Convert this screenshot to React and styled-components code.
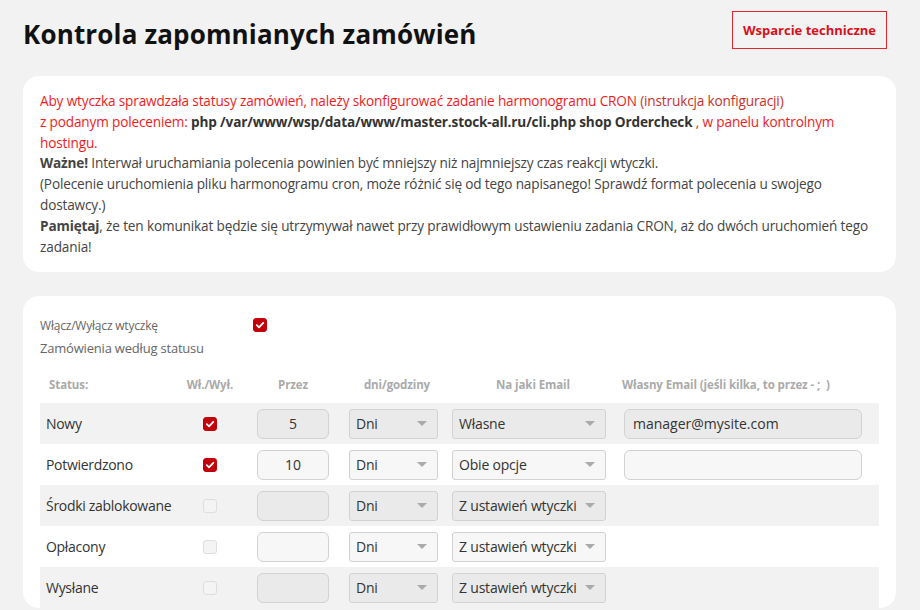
import React from "react";
import styled, { createGlobalStyle } from "styled-components";

const Global = createGlobalStyle`
  html, body { margin: 0; padding: 0; background: #f2f2f2; }
  body { font-family: "Open Sans", "Noto Sans", sans-serif; color: #333; }
  * { box-sizing: border-box; }
`;

const Page = styled.div`
  padding: 11px 24px 0 23px;
  width: 920px;
`;

const Header = styled.div`
  display: flex;
  align-items: flex-start;
  justify-content: space-between;
  height: 65px;
  padding-right: 9px;
`;

const Title = styled.h1`
  margin: 5px 0 0 0;
  font-size: 26px;
  font-weight: 700;
  color: #111;
  letter-spacing: 0.15px;
`;

const SupportButton = styled.button`
  height: 38px;
  padding: 0 10px;
  border: 1px solid #e0262e;
  background: #f3f3f3;
  color: #d8101c;
  font-family: inherit;
  font-weight: 700;
  font-size: 13px;
  letter-spacing: 0;
`;

const Card = styled.div`
  background: #fff;
  border-radius: 16px;
  width: 873px;
  padding: ${(p) => p.$pad || "14px 17px"};
  margin-bottom: ${(p) => p.$mb || "24px"};
`;

const Notice = styled.div`
  font-size: 13.6px;
  line-height: 20.8px;
  color: #444;
  letter-spacing: -0.15px;
  max-width: 840px;
`;

const Red = styled.span`
  color: #f01b22;
`;
const Link = styled.span`
  color: #c8312b;
`;
const Code = styled.b`
  color: #333;
  font-weight: 700;
`;

const ToggleRow = styled.div`
  display: flex;
  align-items: center;
  height: 20px;
  margin-top: 4px;
`;

const SmallLabel = styled.span`
  font-size: 12px;
  color: #666;
  width: 213px;
  letter-spacing: -0.2px;
`;

const Subtitle = styled.div`
  font-size: 13px;
  color: #666;
  margin-top: 4px;
  letter-spacing: -0.2px;
`;

const Grid = styled.div`
  display: grid;
  grid-template-columns: 140px 60px 106px 102px 170px 1fr;
  align-items: center;
  height: ${(p) => p.$h || "41px"};
  background: ${(p) => (p.$shade ? "#f2f2f2" : "#fff")};
`;

const HeadCell = styled.div`
  font-size: 11.5px;
  font-weight: 700;
  color: #aaa;
  text-align: ${(p) => p.$align || "center"};
  padding-left: ${(p) => p.$pl || "0"};
  letter-spacing: -0.1px;
  white-space: nowrap;
`;

const Table = styled.div`
  margin-top: 8px;
`;

const StatusName = styled.div`
  font-size: 14px;
  color: #333;
  padding-left: 6px;
  letter-spacing: -0.3px;
`;

const CheckCell = styled.div`
  display: flex;
  justify-content: center;
`;

const Box = styled.span`
  width: 14px;
  height: 14px;
  border-radius: 3px;
  display: inline-flex;
  align-items: center;
  justify-content: center;
  background: ${(p) => (p.$on ? "#c2000b" : "#f4f4f4")};
  border: 1px solid ${(p) => (p.$on ? "#c2000b" : "#dedede")};
`;

const NumInput = styled.div`
  margin-left: 17px;
  width: 72px;
  height: 30px;
  border: 1px solid #d2d2d2;
  border-radius: 6px;
  background: rgba(0, 0, 0, 0.03);
  display: flex;
  align-items: center;
  justify-content: center;
  font-size: 14px;
  color: #333;
`;

const Select = styled.div`
  margin-left: ${(p) => p.$ml || "3px"};
  width: ${(p) => p.$w || "89px"};
  height: 30px;
  border: 1px solid #d2d2d2;
  border-radius: 3px;
  background: rgba(0, 0, 0, 0.03);
  display: flex;
  align-items: center;
  justify-content: space-between;
  padding: 0 10px 0 6px;
  font-size: 14px;
  color: #333;
  letter-spacing: -0.2px;
`;

const Arrow = styled.span`
  width: 0;
  height: 0;
  border-left: 5px solid transparent;
  border-right: 5px solid transparent;
  border-top: 5px solid #aaa;
`;

const TextInput = styled.div`
  margin-left: 6px;
  width: 238px;
  height: 30px;
  border: 1px solid #d2d2d2;
  border-radius: 6px;
  background: rgba(0, 0, 0, 0.03);
  display: flex;
  align-items: center;
  padding: 0 8px;
  font-size: 14px;
  color: #333;
`;

const Check = ({ on }) => (
  <Box $on={on}>
    {on && (
      <svg width="10" height="10" viewBox="0 0 10 10">
        <path d="M1.8 5.2 L4 7.3 L8.3 2.8" fill="none" stroke="#fff" strokeWidth="1.8" strokeLinecap="round" strokeLinejoin="round" />
      </svg>
    )}
  </Box>
);

const rows = [
  { name: "Nowy", on: true, num: "5", unit: "Dni", mail: "Własne", own: "manager@mysite.com", showOwn: true },
  { name: "Potwierdzono", on: true, num: "10", unit: "Dni", mail: "Obie opcje", own: "", showOwn: true },
  { name: "Środki zablokowane", on: false, num: "", unit: "Dni", mail: "Z ustawień wtyczki", showOwn: false },
  { name: "Opłacony", on: false, num: "", unit: "Dni", mail: "Z ustawień wtyczki", showOwn: false },
  { name: "Wysłane", on: false, num: "", unit: "Dni", mail: "Z ustawień wtyczki", showOwn: false },
];

export default function App() {
  return (
    <>
      <Global />
      <Page>
        <Header>
          <Title>Kontrola zapomnianych zamówień</Title>
          <SupportButton>Wsparcie techniczne</SupportButton>
        </Header>
        <Card $pad="15px 17px 15px 17px">
          <Notice>
            <Red>
              Aby wtyczka sprawdzała statusy zamówień, należy skonfigurować zadanie harmonogramu CRON{" "}
            </Red>
            <Link>(instrukcja konfiguracji)</Link>
            <br />
            <Red>z podanym poleceniem: </Red>
            <Code>php /var/www/wsp/data/www/master.stock-all.ru/cli.php shop Ordercheck</Code>
            <Red> , w panelu kontrolnym hostingu.</Red>
            <br />
            <b>Ważne!</b> Interwał uruchamiania polecenia powinien być mniejszy niż najmniejszy czas reakcji wtyczki.
            <br />
            (Polecenie uruchomienia pliku harmonogramu cron, może różnić się od tego napisanego! Sprawdź format polecenia u swojego dostawcy.)
            <br />
            <b>Pamiętaj</b>, że ten komunikat będzie się utrzymywał nawet przy prawidłowym ustawieniu zadania CRON, aż do dwóch uruchomień tego zadania!
          </Notice>
        </Card>
        <Card $pad="15px 17px 0 17px" $mb="0">
          <ToggleRow>
            <SmallLabel>Włącz/Wyłącz wtyczkę</SmallLabel>
            <Check on />
          </ToggleRow>
          <Subtitle>Zamówienia według statusu</Subtitle>
          <Table>
            <Grid $h="38px">
              <HeadCell $align="left" $pl="9px">Status:</HeadCell>
              <HeadCell>Wł./Wył.</HeadCell>
              <HeadCell>Przez</HeadCell>
              <HeadCell>dni/godziny</HeadCell>
              <HeadCell>Na jaki Email</HeadCell>
              <HeadCell $align="left" $pl="4px">Własny Email (jeśli kilka, to przez - ;&nbsp; )</HeadCell>
            </Grid>
            {rows.map((r, i) => (
              <Grid key={r.name} $shade={i % 2 === 0}>
                <StatusName>{r.name}</StatusName>
                <CheckCell>
                  <Check on={r.on} />
                </CheckCell>
                <NumInput>{r.num}</NumInput>
                <Select>
                  {r.unit}
                  <Arrow />
                </Select>
                <Select $w="154px" $ml="4px">
                  {r.mail}
                  <Arrow />
                </Select>
                {r.showOwn ? <TextInput>{r.own}</TextInput> : <span />}
              </Grid>
            ))}
          </Table>
        </Card>
      </Page>
    </>
  );
}
